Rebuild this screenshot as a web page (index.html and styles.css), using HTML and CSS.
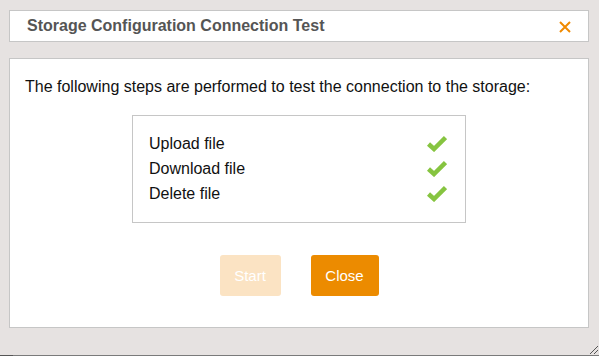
FILE: index.html
```html
<!DOCTYPE html>
<html lang="en">
<head>
    <meta charset="UTF-8">
    <meta name="viewport" content="width=device-width, initial-scale=1.0">
    <title>Storage Configuration Connection Test</title>
    <link rel="stylesheet" href="styles.css">
</head>
<body>
    <div class="dialog">
        <div class="dialog-header">
            <h1>Storage Configuration Connection Test</h1>
            <button type="button" class="close-icon" aria-label="Close">
                <svg width="12" height="12" viewBox="0 0 12 12">
                    <path d="M1 1 L11 11 M11 1 L1 11" stroke="#f08a00" stroke-width="2" fill="none"/>
                </svg>
            </button>
        </div>
        <div class="dialog-body">
            <p class="intro">The following steps are performed to test the connection to the storage:</p>
            <ul class="steps">
                <li><span>Upload file</span><svg class="check" width="20" height="17" viewBox="0 0 20 17"><path d="M1.5 9 L7 14 L18.5 2.5" stroke="#86c440" stroke-width="4.5" fill="none"/></svg></li>
                <li><span>Download file</span><svg class="check" width="20" height="17" viewBox="0 0 20 17"><path d="M1.5 9 L7 14 L18.5 2.5" stroke="#86c440" stroke-width="4.5" fill="none"/></svg></li>
                <li><span>Delete file</span><svg class="check" width="20" height="17" viewBox="0 0 20 17"><path d="M1.5 9 L7 14 L18.5 2.5" stroke="#86c440" stroke-width="4.5" fill="none"/></svg></li>
            </ul>
            <div class="actions">
                <button type="button" class="btn btn-start" disabled>Start</button>
                <button type="button" class="btn btn-close">Close</button>
            </div>
        </div>
    </div>
    <div class="status-bar"></div>
    <svg class="grip" width="10" height="10" viewBox="0 0 10 10">
        <path d="M2 10 L10 2 M6 10 L10 6" stroke="#555" stroke-width="1" fill="none"/>
    </svg>
</body>
</html>
```
FILE: styles.css
```css
body, h1, p, ul, li, button {
    font-family: Arial, "Liberation Sans", sans-serif;
    margin: 0;
    padding: 0;
}

body {
    background-color: #e6e2e1;
    height: 356px;
    overflow: hidden;
    position: relative;
    box-sizing: border-box;
    padding: 10px 10px 0 9px;
}

.dialog-header {
    background-color: #ffffff;
    border: 1px solid #c6c6c6;
    height: 30px;
    display: flex;
    align-items: center;
    justify-content: space-between;
    padding: 0 17px 0 17px;
    margin-bottom: 16px;
}

h1 {
    font-size: 16px;
    font-weight: bold;
    color: #555555;
}

.close-icon {
    background: none;
    border: none;
    display: flex;
    cursor: pointer;
    margin-top: 2px;
}

.dialog-body {
    background-color: #ffffff;
    border: 1px solid #c6c6c6;
    height: 270px;
    padding: 18px 15px 0 15px;
    box-sizing: border-box;
    display: flex;
    flex-direction: column;
    align-items: center;
}

.intro {
    font-size: 16px;
    line-height: 20px;
    color: #111111;
    align-self: flex-start;
    margin-bottom: 18px;
}

.steps {
    list-style: none;
    width: 298px;
    border: 1px solid #c6c6c6;
    padding: 15px 18px 16px 16px;
}

.steps li {
    display: flex;
    align-items: center;
    justify-content: space-between;
    height: 25px;
    font-size: 16px;
    color: #111111;
}

.actions {
    display: flex;
    gap: 30px;
    margin-top: 32px;
}

.btn {
    height: 41px;
    border: none;
    border-radius: 3px;
    color: #ffffff;
    font-size: 15px;
}

.btn-start {
    width: 61px;
    background-color: #fbe3c3;
}

.btn-close {
    width: 68px;
    background-color: #ec8b00;
    cursor: pointer;
}

.status-bar {
    position: absolute;
    left: 0;
    right: 0;
    bottom: 0;
    height: 1px;
    background: linear-gradient(to right, #555 0 13px, #7a7a7a 13px);
}

.grip {
    position: absolute;
    right: 1px;
    bottom: 2px;
}
```
